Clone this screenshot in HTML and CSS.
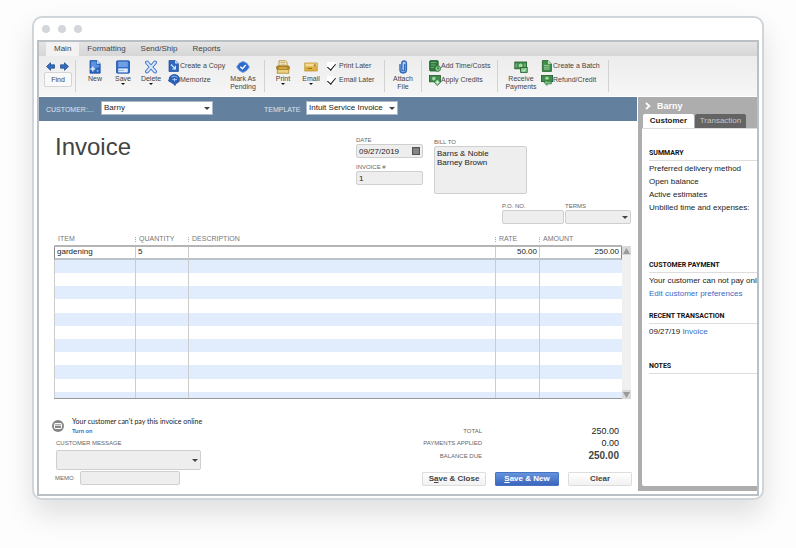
FILE: index.html
```html
<!DOCTYPE html>
<html lang="en">
<head>
  <meta charset="UTF-8">
  <meta name="viewport" content="width=device-width, initial-scale=1">
  <title>Invoice</title>
  <link rel="stylesheet" href="styles.css">
</head>
<body>
  <div class="window">
    <div class="window-bar">
      <span class="dot"></span>
      <span class="dot"></span>
      <span class="dot"></span>
    </div>

    <div class="app">
      <!-- Ribbon -->
      <nav class="tabs">
        <button class="tab active">Main</button>
        <button class="tab">Formatting</button>
        <button class="tab">Send/Ship</button>
        <button class="tab">Reports</button>
      </nav>

      <div class="toolbar">
        <div class="group group-nav">
          <div class="arrows">
            <button aria-label="Previous"><svg width="9" height="9" viewBox="0 0 9 9"><path d="M0.5 4.5L4.5 0.7V2.8H8.5V6.2H4.5V8.3Z" fill="#2f6fc4" stroke="#1d4688" stroke-width=".7"/></svg></button>
            <button aria-label="Next"><svg width="9" height="9" viewBox="0 0 9 9"><path d="M8.5 4.5L4.5 0.7V2.8H0.5V6.2H4.5V8.3Z" fill="#2f6fc4" stroke="#1d4688" stroke-width=".7"/></svg></button>
          </div>
          <button class="find">Find</button>
        </div>

        <div class="group group-file">
          <button class="tool">
            <svg width="14" height="14" viewBox="0 0 14 14"><path d="M2 .6H9L12.2 3.8V13.2H2Z" fill="#2f66bf" stroke="#234f9f" stroke-width=".8"/><path d="M3 1.4H8.4V5H11.4V7L3 9Z" fill="#5b93e2"/><path d="M9 .6V3.8H12.2Z" fill="#cfe0f8"/><path d="M4.8 6.6V11.4M2.4 9H7.2" stroke="#dcebff" stroke-width="1.4"/><circle cx="9.6" cy="10.8" r=".9" fill="#a9c8f6"/></svg>
            <span>New</span>
          </button>
          <button class="tool">
            <svg width="14" height="14" viewBox="0 0 14 14"><rect x=".5" y=".8" width="13" height="12.4" rx="1" fill="#2f6bcb" stroke="#234f9f" stroke-width=".8"/><rect x="2.2" y="1.6" width="9.6" height="5.4" fill="#6fa0e6"/><rect x="2.2" y="8.4" width="9.6" height="4" fill="#dfebfb"/><path d="M2.2 10.4H8" stroke="#8fb2e8"/></svg>
            <span>Save</span><i class="caret"></i>
          </button>
          <button class="tool">
            <svg width="14" height="14" viewBox="0 0 14 14"><path d="M3 2.5L11 11.5M11 2.5L3 11.5" stroke="#3c6fc0" stroke-width="3.8" stroke-linecap="round"/><path d="M3 2.5L11 11.5M11 2.5L3 11.5" stroke="#d6e6fb" stroke-width="2" stroke-linecap="round"/></svg>
            <span>Delete</span><i class="caret"></i>
          </button>
          <div class="stack">
            <button class="line">
              <svg width="12" height="12" viewBox="0 0 12 12"><path d="M1 .5H7L10.4 3.6V11.5H1Z" fill="#2f66bf" stroke="#1f4890" stroke-width=".7"/><path d="M7 .5V3.6H10.4Z" fill="#cfe0f8"/><path d="M3 4.5L7 8.6M7.4 5.8V9H4.2" fill="none" stroke="#d5e6ff" stroke-width="1.2"/></svg>
              Create a Copy
            </button>
            <button class="line">
              <svg width="12" height="12" viewBox="0 0 12 12"><path d="M1 6C1 2.4 3.5 .6 6.4 .6C9.5 .6 11.6 2.8 11.6 5.4C11.6 7.8 10 9 8 9.2L7 11.6L5 9.4L.3 6.8Z" fill="#2a5fb8" stroke="#1f4890" stroke-width=".7"/><path d="M3.6 3.4C5 1.8 8 1.8 9.4 3.6" fill="none" stroke="#7fb0f2" stroke-width="1.2"/><path d="M4.4 5.6H9M6.6 4V7.4" stroke="#a5c8f8"/></svg>
              Memorize
            </button>
          </div>
          <button class="tool">
            <svg width="14" height="14" viewBox="0 0 14 14"><path d="M.6 7L3.4 3L7 1.4L10.6 3L13.4 7L10.6 10.6L7 12.6L3.4 10.6Z" fill="#2f6bcb" stroke="#6a9ae0" stroke-width=".8"/><path d="M4.4 6.8L6.4 8.8L9.8 5" fill="none" stroke="#fff" stroke-width="1.4"/></svg>
            <span>Mark As<br>Pending</span>
          </button>
        </div>

        <div class="group group-print">
          <button class="tool">
            <svg width="14" height="14" viewBox="0 0 14 14"><path d="M3 .8H9.6L11 2.2V6H3Z" fill="#fbf4dc" stroke="#a88222" stroke-width=".8"/><path d="M4.4 2.6H9.4M4.4 4.2H9.4" stroke="#b39445" stroke-width=".7"/><rect x=".6" y="6" width="12.8" height="3.4" rx="1" fill="#b8891f" stroke="#8d6a14" stroke-width=".7"/><rect x="1.2" y="9.4" width="11.6" height="3.8" fill="#ecd07c" stroke="#a17a1c" stroke-width=".7"/><path d="M3 8H11" stroke="#f0d88e" stroke-width=".8"/></svg>
            <span>Print</span><i class="caret"></i>
          </button>
          <button class="tool">
            <svg width="14" height="14" viewBox="0 0 14 14"><rect x=".8" y="3" width="12.4" height="8" fill="#ddb044" stroke="#b98d24" stroke-width=".7"/><rect x="1.4" y="3.6" width="11.2" height="2.8" fill="#f5dc93"/><path d="M3.6 8.4H8" stroke="#8d6a14" stroke-width=".9"/><rect x="9.8" y="4.4" width="2" height="2" fill="#a8752a"/></svg>
            <span>Email</span><i class="caret"></i>
          </button>
          <div class="stack checks">
            <label class="line"><input type="checkbox" checked>Print Later</label>
            <label class="line"><input type="checkbox" checked>Email Later</label>
          </div>
        </div>

        <div class="group group-attach">
          <button class="tool">
            <svg width="14" height="14" viewBox="0 0 14 14"><path d="M4 4.5V9.8C4 14 10.4 14 10.4 9.8V3.4C10.4 .2 5.8 .2 5.8 3.4V9.4C5.8 11.3 8.6 11.3 8.6 9.4V4.4" fill="#b9d0f2" stroke="#3469b8" stroke-width="1.4" stroke-linecap="round"/></svg>
            <span>Attach<br>File</span>
          </button>
        </div>

        <div class="group group-costs">
          <div class="stack">
            <button class="line">
              <svg width="12" height="12" viewBox="0 0 12 12"><rect x=".6" y=".6" width="8.6" height="10.4" rx="1" fill="#2f7a3c" stroke="#1e5a2a" stroke-width=".8"/><path d="M2 2.6H7.6M2 5H6.4M2 7.4H5" stroke="#7fbd84" stroke-width=".8"/><circle cx="8.8" cy="8.6" r="2.8" fill="#8ccc90" stroke="#256b33" stroke-width=".8"/><path d="M8.8 7V8.8H10.2" fill="none" stroke="#1e5a2a" stroke-width=".8"/></svg>
              Add Time/Costs
            </button>
            <button class="line">
              <svg width="12" height="12" viewBox="0 0 12 12"><rect x=".4" y="1.4" width="11" height="6.4" fill="#3f8f4b" stroke="#1e5a2a" stroke-width=".8"/><circle cx="4.8" cy="4.6" r="1.8" fill="#a4d6a4"/><path d="M8.4 4.8L11.6 8.2L8.4 11.6L5.2 8.2Z" fill="#7cc382" stroke="#256b33" stroke-width=".7"/><path d="M8.4 6.6V9.8M6.8 8.2H10" stroke="#eaffea" stroke-width=".9"/></svg>
              Apply Credits
            </button>
          </div>
        </div>

        <div class="group group-receive">
          <button class="tool wide">
            <svg width="14" height="14" viewBox="0 0 14 14"><rect x=".8" y="2" width="11.8" height="6.8" fill="#3f8f4b" stroke="#1e5a2a" stroke-width=".8"/><circle cx="6.6" cy="5.4" r="2" fill="#a4d6a4"/><path d="M2.2 3.6V7.2M11 3.6V7.2" stroke="#8cc890"/><rect x="6.6" y="7.4" width="6.6" height="5" fill="#7cc382" stroke="#1e5a2a" stroke-width=".8"/><path d="M8.2 9.8L9.6 11.2L11.8 8.6" fill="none" stroke="#eaffea" stroke-width=".9"/></svg>
            <span>Receive<br>Payments</span>
          </button>
          <div class="stack">
            <button class="line">
              <svg width="12" height="12" viewBox="0 0 12 12"><path d="M1.4 .6H7L10.4 3.8V11.4H1.4Z" fill="#3f8f4b" stroke="#1e5a2a" stroke-width=".8"/><path d="M7 .6V3.8H10.4Z" fill="#c8eac6"/><path d="M3 5.4H8.6M3 7.2H8.6M3 9H8.6" stroke="#b3dcb2" stroke-width=".8"/></svg>
              Create a Batch
            </button>
            <button class="line">
              <svg width="12" height="12" viewBox="0 0 12 12"><rect x=".4" y="1.4" width="11.2" height="6.2" fill="#3f8f4b" stroke="#1e5a2a" stroke-width=".8"/><circle cx="6" cy="4.2" r="1.7" fill="#a4d6a4"/><path d="M3 8.4L6 5.8V7.2H10.4V9.8H6V11.4Z" fill="#7cc382" stroke="#256b33" stroke-width=".7"/></svg>
              Refund/Credit
            </button>
          </div>
        </div>
      </div>

      <div class="content">
        <main class="main">
          <div class="picker-bar">
            <label for="customer">CUSTOMER:...</label>
            <div class="select customer"><select id="customer"><option>Barny</option></select></div>
            <label class="template-label" for="template">TEMPLATE</label>
            <div class="select template"><select id="template"><option>Intuit Service Invoice</option></select></div>
          </div>

          <div class="sheet">
            <div class="head">
              <h1>Invoice</h1>
              <div class="head-fields">
                <div class="dates">
                  <label for="date">DATE</label>
                  <div class="date-box">
                    <input id="date" type="text" value="09/27/2019">
                    <svg width="8" height="8" viewBox="0 0 8 8"><rect x=".5" y=".5" width="7" height="7" fill="#777" stroke="#555"/><path d="M1 2.5H7M1 4.3H7M1 6H7M3 2.5V7M5 2.5V7" stroke="#999" stroke-width=".5"/></svg>
                  </div>
                  <label for="number">INVOICE #</label>
                  <input id="number" type="text" value="1">
                </div>
                <div class="bill">
                  <label for="bill">BILL TO</label>
                  <textarea id="bill">Barns &amp; Noble
Barney Brown</textarea>
                </div>
              </div>
            </div>

            <div class="terms">
              <div class="po">
                <label for="po">P.O. NO.</label>
                <input id="po" type="text">
              </div>
              <div class="term">
                <label for="terms">TERMS</label>
                <div class="select"><select id="terms"><option></option></select></div>
              </div>
            </div>

            <!-- Line items -->
            <div class="items">
              <table>
                <thead>
                  <tr><th class="c-item">ITEM</th><th class="c-qty">QUANTITY</th><th>DESCRIPTION</th><th class="c-rate">RATE</th><th class="c-amount">AMOUNT</th></tr>
                </thead>
                <tbody>
                  <tr><td>gardening</td><td>5</td><td></td><td class="num">50.00</td><td class="num">250.00</td></tr>
                  <tr><td></td><td></td><td></td><td></td><td></td></tr>
                  <tr><td></td><td></td><td></td><td></td><td></td></tr>
                  <tr><td></td><td></td><td></td><td></td><td></td></tr>
                  <tr><td></td><td></td><td></td><td></td><td></td></tr>
                  <tr><td></td><td></td><td></td><td></td><td></td></tr>
                  <tr><td></td><td></td><td></td><td></td><td></td></tr>
                  <tr><td></td><td></td><td></td><td></td><td></td></tr>
                  <tr><td></td><td></td><td></td><td></td><td></td></tr>
                  <tr><td></td><td></td><td></td><td></td><td></td></tr>
                  <tr><td></td><td></td><td></td><td></td><td></td></tr>
                  <tr><td></td><td></td><td></td><td></td><td></td></tr>
                </tbody>
              </table>
              <div class="scroll">
                <button aria-label="Scroll up"><svg width="7" height="6" viewBox="0 0 7 6"><path d="M0 6L3.5 0L7 6Z" fill="#999"/></svg></button>
                <button aria-label="Scroll down"><svg width="7" height="6" viewBox="0 0 7 6"><path d="M0 0L3.5 6L7 0Z" fill="#999"/></svg></button>
              </div>
            </div>

            <div class="foot">
              <div class="foot-left">
                <div class="pay-note">
                  <svg width="12" height="12" viewBox="0 0 12 12"><circle cx="6" cy="6" r="6" fill="#858585"/><rect x="2.5" y="3.5" width="7" height="5" rx=".6" fill="none" stroke="#fff"/><path d="M2.5 5.2H9.5" stroke="#fff"/></svg>
                  <div>
                    <p>Your customer can't pay this invoice online</p>
                    <a href="#">Turn on</a>
                  </div>
                </div>
                <label class="message-label" for="message">CUSTOMER MESSAGE</label>
                <div class="select message"><select id="message"><option></option></select></div>
                <div class="memo">
                  <label for="memo">MEMO</label>
                  <input id="memo" type="text">
                </div>
              </div>

              <div class="foot-right">
                <dl class="totals">
                  <dt>TOTAL</dt><dd>250.00</dd>
                  <dt>PAYMENTS APPLIED</dt><dd>0.00</dd>
                  <dt>BALANCE DUE</dt><dd class="due">250.00</dd>
                </dl>
                <div class="actions">
                  <button>S<u>a</u>ve &amp; Close</button>
                  <button class="primary"><u>S</u>ave &amp; New</button>
                  <button>Clear</button>
                </div>
              </div>
            </div>
          </div>
        </main>

        <!-- Customer panel -->
        <aside class="side">
          <div class="side-title">
            <svg width="6" height="8" viewBox="0 0 6 8"><path d="M1 1L4.4 4L1 7" fill="none" stroke="#fff" stroke-width="1.8"/></svg>
            <h2>Barny</h2>
          </div>
          <div class="side-tabs">
            <button class="active">Customer</button>
            <button>Transaction</button>
          </div>
          <div class="side-body">
            <section class="summary">
              <h3>SUMMARY</h3>
              <p>Preferred delivery method</p>
              <p>Open balance</p>
              <p>Active estimates</p>
              <p>Unbilled time and expenses:</p>
            </section>
            <section class="payment">
              <h3>CUSTOMER PAYMENT</h3>
              <p>Your customer can not pay online</p>
              <p><a href="#">Edit customer preferences</a></p>
            </section>
            <section class="recent">
              <h3>RECENT TRANSACTION</h3>
              <p>09/27/19 <a href="#">Invoice</a></p>
            </section>
            <section>
              <h3>NOTES</h3>
            </section>
          </div>
        </aside>
      </div>
    </div>
  </div>
</body>
</html>
```
FILE: styles.css
```css
* {
  margin: 0;
  padding: 0;
  box-sizing: border-box;
}

body {
  padding: 16px 32px 48px;
  background: #fdfdfd;
  font-family: "Liberation Sans", Arial, sans-serif;
  font-size: 8px;
  line-height: 10px;
  color: #222;
}

button,
input,
select,
textarea {
  font: inherit;
  color: inherit;
  border: none;
  background: none;
}

a {
  color: #3a6cc6;
  text-decoration: none;
}

svg {
  display: block;
  flex: none;
}

/* === WINDOW === */
.window {
  border: 2px solid #d0d5da;
  border-radius: 10px;
  background: #fff;
  padding: 0 3px 2px;
  box-shadow: 0 14px 28px rgba(0, 0, 0, 0.12);
}

.window-bar {
  display: flex;
  align-items: center;
  gap: 8px;
  height: 22px;
  padding-left: 8px;
}

.window-bar {
  padding-left: 5px;
}

.dot {
  width: 8px;
  height: 8px;
  border-radius: 50%;
  background: #d3d6db;
}

.app {
  border: 2px solid #b9c0c6;
  overflow: hidden;
}

/* === RIBBON === */
.tabs {
  display: flex;
  height: 14px;
  padding-left: 7px;
  background: linear-gradient(#e4e4e4, #d6d6d6);
}

.tab {
  padding: 0 7px 0 8px;
  color: #444;
}

.tab.active {
  padding: 0 8px;
  background: #f2f2f2;
}

.toolbar {
  display: flex;
  height: 41px;
  padding: 4px 0;
  background: linear-gradient(#ececec, #f6f6f6);
  border-bottom: 1px solid #fff;
  font-size: 7px;
  line-height: 8px;
  color: #444;
}

.group {
  display: flex;
  flex: none;
  align-items: flex-start;
  border-right: 1px solid #d2d2d2;
}

.group-nav {
  flex-direction: column;
  width: 37px;
  padding-left: 5px;
}

.group-file {
  width: 189px;
  padding-left: 5px;
}

.group-print {
  width: 120px;
  padding-left: 4px;
}

.group-attach {
  width: 37px;
  padding-left: 4px;
}

.group-costs {
  width: 76px;
  padding-left: 7px;
}

.group-receive {
  width: 111px;
  padding-left: 6px;
}

.arrows {
  display: flex;
  gap: 5px;
  padding-left: 2px;
  height: 12px;
}

.find {
  width: 28px;
  height: 15px;
  border: 1px solid #d4d4d4;
  border-radius: 2px;
  background: #f9f9f9;
}

.tool {
  display: flex;
  flex-direction: column;
  align-items: center;
  width: 28px;
  white-space: nowrap;
}

.tool span {
  padding-top: 1px;
}

.tool.wide {
  width: 34px;
}

.caret {
  border: 2px solid transparent;
  border-top-color: #111;
  border-bottom: none;
}

.stack {
  display: flex;
  flex-direction: column;
  gap: 2px;
  padding: 0 3px;
}

.line {
  display: flex;
  align-items: center;
  height: 12px;
  white-space: nowrap;
}

.group-file .stack {
  width: 64px;
}

.group-costs .stack {
  padding: 0;
}

.group-print .stack {
  padding: 0 2px;
}

.checks input {
  appearance: none;
  display: flex;
  align-items: flex-start;
  justify-content: center;
  width: 8px;
  height: 8px;
  margin-right: 4px;
  background: #fff;
}

.checks input:checked::before {
  content: "";
  width: 4px;
  height: 7px;
  border: solid #111;
  border-width: 0 1px 1px 0;
  transform: rotate(40deg);
}

/* === CONTENT === */
.content {
  display: flex;
}

.main {
  flex: 1;
  min-width: 0;
}

.select {
  display: flex;
  position: relative;
}

.select select {
  appearance: none;
  width: 100%;
}

.select::after {
  content: "";
  position: absolute;
  right: 3px;
  top: 50%;
  margin-top: -1px;
  border: 3px solid transparent;
  border-top-color: #444;
  border-bottom: none;
  pointer-events: none;
}

.picker-bar {
  display: flex;
  align-items: center;
  height: 24px;
  padding: 0 7px 2px;
  background: #64809f;
}

.picker-bar label {
  width: 55px;
  padding-top: 4px;
  font-size: 7px;
  color: #dde5ee;
}

.picker-bar select {
  height: 14px;
  padding: 0 2px;
  background: #fff;
  border: 1px solid #a9b9ca;
}

.picker-bar .customer {
  flex: none;
  width: 112px;
  margin-right: 51px;
}

.picker-bar .template-label {
  width: 42px;
}

.picker-bar .template {
  flex: none;
  width: 92px;
}

.sheet {
  padding: 12px 5px 8px 13px;
}

.sheet label {
  display: block;
  font-size: 6px;
  line-height: 8px;
  color: #666;
}

.sheet input,
.sheet textarea,
.sheet select {
  display: block;
  height: 14px;
  padding: 0 2px;
  background: #eee;
  border: 1px solid #cfcfcf;
  border-radius: 2px;
}

.head {
  display: flex;
  justify-content: space-between;
}

h1 {
  padding-left: 3px;
  font-size: 24px;
  line-height: 28px;
  font-weight: 400;
  color: #444;
}

.head-fields {
  display: flex;
  gap: 11px;
  margin-right: 105px;
}

.dates {
  width: 67px;
  padding-top: 3px;
}

.dates input {
  width: 100%;
}

.date-box {
  position: relative;
  margin-bottom: 5px;
}

.date-box svg {
  position: absolute;
  top: 3px;
  right: 3px;
}

.bill {
  width: 93px;
  padding-top: 5px;
}

.sheet .bill textarea {
  width: 100%;
  height: 48px;
  padding: 2px;
  line-height: 9px;
  resize: none;
}

.terms {
  display: flex;
  justify-content: flex-end;
  gap: 1px;
  margin: 8px 1px 10px 0;
}

.po input {
  width: 62px;
}

.term {
  width: 66px;
}

/* === LINE ITEMS === */
.items {
  display: flex;
  align-items: flex-end;
  margin: 0 1px 0 2px;
}

table {
  flex: 1;
  table-layout: fixed;
  border-spacing: 0;
  border-bottom: 1px solid #999;
}

th {
  height: 13px;
  padding: 0 4px 1px;
  border-bottom: 2px solid #b5b5b5;
  font-size: 7px;
  font-weight: 400;
  text-align: left;
  color: #777;
}

th + th {
  background: repeating-linear-gradient(#aaa 0 1px, transparent 1px 2px) 0 3px / 1px 5px no-repeat;
}

.c-item {
  width: 81px;
}

.c-qty {
  width: 53px;
}

.c-rate {
  width: 44px;
}

.c-amount {
  width: 83px;
}

td {
  height: 13px;
  padding: 0 2px;
  border-left: 1px solid #ccc;
  line-height: 9px;
}

tbody tr:first-child td {
  height: 13px;
  padding-bottom: 2px;
  border-bottom: 2px solid #bcc3c9;
}

tbody tr:first-child td:first-child {
  border-left-color: #888;
}

tbody tr:first-child td:last-child {
  border-right: 1px solid #888;
}

tbody tr:nth-child(even) {
  background: #e1edfd;
}

tbody tr:nth-child(5n) td {
  height: 14px;
}

tbody tr:last-child td {
  height: 6px;
}

.num {
  text-align: right;
}

.scroll {
  display: flex;
  flex-direction: column;
  justify-content: space-between;
  width: 9px;
  height: 153px;
  background: #f0f0f0;
}

.scroll button {
  display: flex;
  align-items: center;
  justify-content: center;
  height: 9px;
  background: #d9d9d9;
}

/* === FOOTER === */
.foot {
  display: flex;
  justify-content: space-between;
  padding-top: 18px;
}

.pay-note {
  display: flex;
  align-items: center;
  gap: 8px;
  font-family: Lato, "Open Sans", sans-serif;
  font-size: 7px;
  line-height: 9px;
}

.pay-note a {
  display: block;
  font-size: 6px;
  font-weight: 700;
}

.sheet .message-label {
  padding: 4px 4px 3px;
}

.message {
  width: 145px;
  margin-left: 4px;
}

.message select {
  height: 20px;
}

.memo {
  display: flex;
  align-items: center;
  gap: 6px;
  padding: 1px 0 0 3px;
}

.memo input {
  width: 100px;
}

.foot-right {
  padding-top: 8px;
}

.totals {
  display: grid;
  grid-template-columns: auto 137px;
  justify-content: end;
  align-items: center;
  padding-right: 13px;
  text-align: right;
}

dt {
  padding-top: 1px;
  font-size: 6px;
  line-height: 11px;
  color: #666;
}

dd {
  font-size: 9px;
  line-height: 12px;
}

.due {
  font-size: 10px;
  line-height: 14px;
  font-weight: 700;
  color: #444;
}

.actions {
  display: flex;
  gap: 9px;
  margin-top: 9px;
}

.actions button {
  width: 64px;
  height: 14px;
  border: 1px solid #ddd;
  border-radius: 1px;
  background: linear-gradient(#fff, #f1f1f1);
  font-weight: 700;
  color: #444;
}

.actions .primary {
  border-color: #4673c4;
  background: linear-gradient(#6593dc, #3a66bd);
  color: #fff;
}

/* === SIDE PANEL === */
.side {
  display: flex;
  flex-direction: column;
  width: 119px;
  margin: 0 0 3px 1px;
  padding: 0 0 5px 4px;
  background: #adadad;
}

.side-title {
  display: flex;
  align-items: center;
  gap: 6px;
  height: 17px;
  padding-left: 3px;
  color: #fff;
}

h2 {
  font-size: 9px;
}

.side-tabs {
  display: flex;
  gap: 1px;
  height: 14px;
  padding-left: 1px;
}

.side-tabs button {
  width: 51px;
  border-radius: 2px 2px 0 0;
  background: #646464;
  color: #c4c4c4;
}

.side-tabs .active {
  background: #fff;
  font-weight: 700;
  color: #222;
}

.side-body {
  flex: 1;
  padding: 20px 0 0 7px;
  border-top: 1px solid #ddd;
  border-radius: 0 0 0 2px;
  background: #fff;
  overflow: hidden;
}

h3 {
  margin-bottom: 1px;
  padding-bottom: 3px;
  border-bottom: 1px solid #ddd;
  font-family: Roboto, "Liberation Sans", sans-serif;
  font-size: 7px;
  line-height: 8px;
  color: #111;
}

.side-body p {
  line-height: 13px;
  white-space: nowrap;
}

.summary {
  margin-bottom: 47px;
}

.payment {
  margin-bottom: 12px;
}

.recent {
  margin-bottom: 24px;
}
```
